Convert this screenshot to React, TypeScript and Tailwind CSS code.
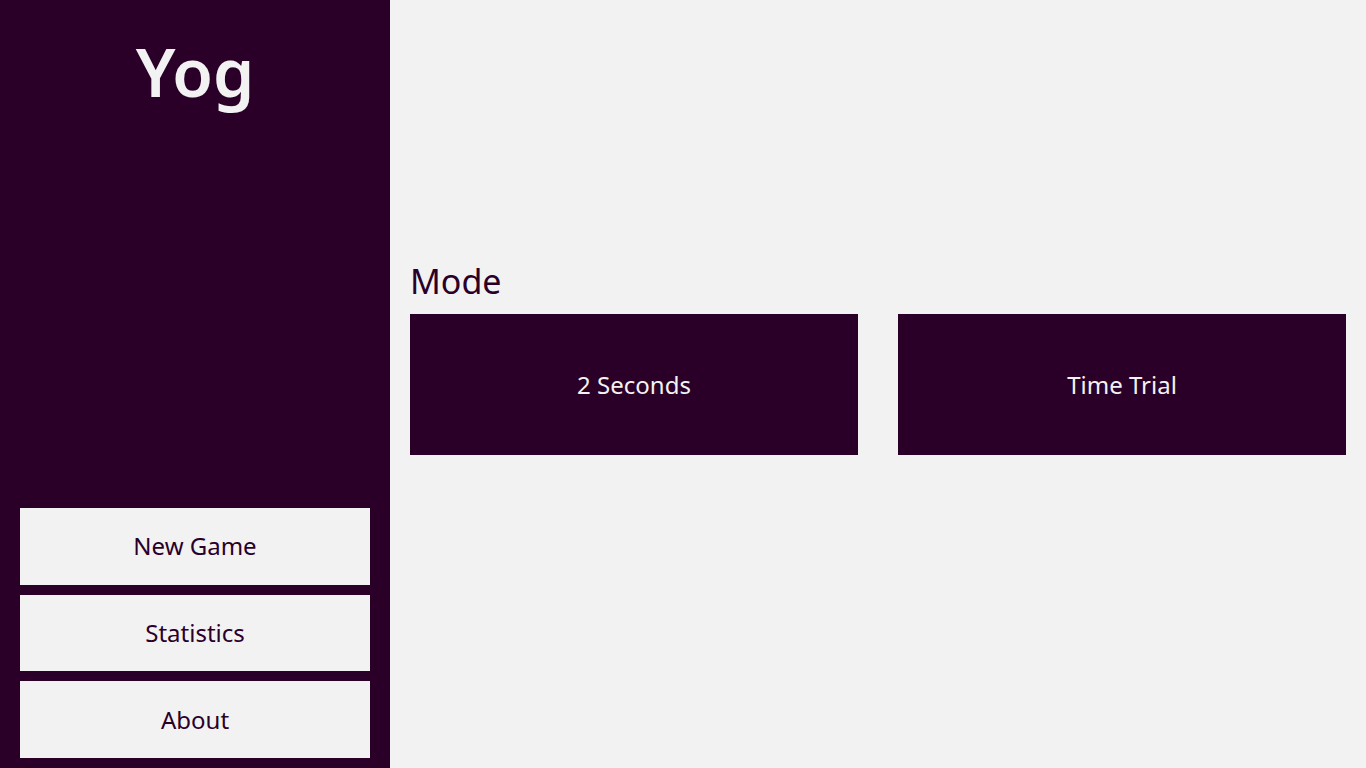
const font = "font-['Segoe_UI','Noto_Sans','Open_Sans',sans-serif]";

function NavButton({ label }: { label: string }) {
  return (
    <button className="h-[76.67px] w-full bg-[#f2f2f2] text-[24px] text-[#2a0029] flex items-center justify-center">
      {label}
    </button>
  );
}

function ModeCard({ label }: { label: string }) {
  return (
    <button className="h-[141px] bg-[#2a0029] text-[24px] text-[#f2f2f2] flex items-center justify-center">
      {label}
    </button>
  );
}

export default function App() {
  return (
    <div className={`flex h-[768px] w-[1366px] overflow-hidden bg-[#f2f2f2] ${font}`}>
      {/* Sidebar */}
      <aside className="flex w-[390px] flex-col bg-[#2a0029]">
        <h1 className="pt-[21px] text-center text-[66px] font-semibold leading-[100px] text-[#f2f2f2]">Yog</h1>
        <div className="flex-1" />
        <nav className="flex flex-col gap-[10px] px-5 pb-[10px]">
          <NavButton label="New Game" />
          <NavButton label="Statistics" />
          <NavButton label="About" />
        </nav>
      </aside>

      {/* Main */}
      <main className="flex-1 px-5 pt-[257px]">
        <h2 className="text-[34px] leading-[48px] text-[#2a0029]">Mode</h2>
        <div className="mt-[9px] grid grid-cols-2 gap-10">
          <ModeCard label="2 Seconds" />
          <ModeCard label="Time Trial" />
        </div>
      </main>
    </div>
  );
}
